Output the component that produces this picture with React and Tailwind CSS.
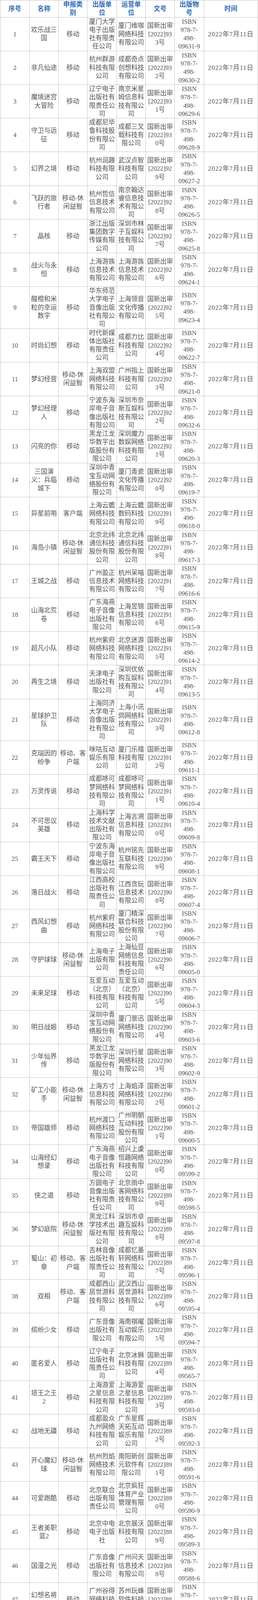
import React from "react";

// 序号 = index + 1, 文号 = 934 - 序号
const rows = [
    ["欢乐战三国", "移动", "厦门大学电子出版社有限责任公司", "厦门维咖网络科技有限公司", "09631-9"],
    ["非凡仙途", "移动", "杭州群游科技有限公司", "成都奇点创想科技有限公司", "09630-2"],
    ["魔境迷宫大冒险", "移动", "辽宁电子出版社有限责任公司", "南京米星姆信息科技有限公司", "09629-6"],
    ["守卫与远征", "移动", "成都尼毕鲁科技股份有限公司", "成都三叉戟科技有限公司", "09628-9"],
    ["幻界之境", "移动", "杭州润趣科技有限公司", "武汉点智科技有限公司", "09627-2"],
    ["飞跃的旅行者", "移动-休闲益智", "杭州哲信信息技术有限公司", "南京翰达睿信息技术有限公司", "09626-5"],
    ["晶核", "移动", "浙江出版集团数字传媒有限公司", "深圳市林子互娱科技有限公司", "09625-8"],
    ["战火与永恒", "移动", "上海游族信息技术有限公司", "上海游族信息技术有限公司", "09624-1"],
    ["酸橙和米粒的幸运数字", "移动", "华东师范大学电子音像出版社有限公司", "上海领音文化传播有限公司", "09623-4"],
    ["时尚幻想", "移动", "时代新媒体出版社有限责任公司", "成都力比科技有限公司", "09622-7"],
    ["梦幻经营", "移动-休闲益智", "上海双盟网络科技有限公司", "广州指上科技有限公司", "09621-0"],
    ["梦幻经理人", "移动", "宁波东海岸电子音像出版社有限公司", "深圳市奈斯互娱科技有限公司", "09632-6"],
    ["闪亮的你", "移动", "黑龙江龙华数字出版股份有限公司", "深圳魔力数娱网络科技有限公司", "09620-3"],
    ["三国演义：兵临城下", "移动", "深圳中青宝互动网络股份有限公司", "厦门青瓷文化传播有限公司", "09619-7"],
    ["异星前哨", "客户端", "上海云蟾网络科技有限公司", "上海云蟾数码科技有限公司", "09618-0"],
    ["海岛小镇", "移动-休闲益智", "北京北纬通信科技股份有限公司", "北京北纬通信科技股份有限公司", "09617-3"],
    ["王城之战", "移动", "广州盈正信息技术有限公司", "杭州呆喵网络科技有限公司", "09616-6"],
    ["山海北荒卷", "移动", "广东海燕电子音像出版社有限公司", "上海昱锦信息科技有限公司", "09615-9"],
    ["超凡小队", "移动", "杭州紫府网络科技有限公司", "北京迷游网络科技有限公司", "09614-2"],
    ["再生之境", "移动", "天津电子出版社有限公司", "深圳优依购互娱科技有限公司", "09613-5"],
    ["星球护卫队", "移动", "上海同济大学电子音像出版社有限公司", "上海小讯鸽网络科技有限公司", "09612-8"],
    ["克瑞因的纷争", "移动、客户端", "咪咕互动娱乐有限公司", "厦门乐禧科技有限公司", "09611-1"],
    ["万灵传说", "移动", "成都哆可梦网络科技有限公司", "成都哆可梦网络科技有限公司", "09610-4"],
    ["不可思议英雄", "移动", "上海科学技术文献出版社有限公司", "上海言溯信息科技有限公司", "09609-8"],
    ["霸王天下", "移动", "宁波东海岸电子音像出版社有限公司", "杭州铭先互联科技有限公司", "09608-1"],
    ["落日战火", "移动", "江西高校出版社有限责任公司", "江西贪玩信息技术有限公司", "09607-4"],
    ["西风幻想曲", "移动", "杭州紫府网络科技有限公司", "厦门精深联合科技股份有限公司", "09606-7"],
    ["守护球球", "移动-休闲益智", "上海电子出版有限公司", "上海仙豆网络信息科技有限责任公司", "09605-0"],
    ["未来足球", "移动", "互爱互动（北京）科技有限公司", "互爱互动（北京）科技有限公司", "09604-3"],
    ["明日战姬", "移动", "深圳中青宝互动网络股份有限公司", "厦门景迅网络科技有限公司", "09603-6"],
    ["少年仙界传", "移动", "黑龙江龙华数字出版股份有限公司", "深圳行星网络科技有限公司", "09602-9"],
    ["矿工小能手", "移动-休闲益智", "上海方寸信息科技有限公司", "上海焰泽网络科技有限公司", "09601-2"],
    ["帝国雄师", "移动", "杭州渡口网络科技有限公司", "广州明朝互动科技股份有限公司", "09600-5"],
    ["山海经幻想录", "移动", "广东海燕电子音像出版社有限公司", "绍兴上虞恒趣网络科技有限公司", "09599-2"],
    ["侠之道", "移动", "方圆电子音像出版社有限责任公司", "北京雨中客网络科技有限公司", "09598-5"],
    ["梦幻庭院", "移动-休闲益智", "黑龙江科学技术出版社有限公司", "深圳市卓趣互娱科技有限公司", "09597-8"],
    ["蜀山：初章", "移动、客户端", "吉林音像出版社有限责任公司", "成都忆墨轩网络科技有限公司", "09596-1"],
    ["双相", "移动、客户端", "成都西山居世游科技有限公司", "武汉西山居世游科技有限公司", "09595-4"],
    ["缤纷少女", "移动", "广东音像出版社有限公司", "海南祺曜互动娱乐有限公司", "09594-7"],
    ["匿名爱人", "移动", "辽宁电子出版社有限责任公司", "北京冰狮科技有限公司", "09565-7"],
    ["塔王之王2", "移动", "上海游爱之星信息科技有限公司", "上海游爱之星信息科技有限公司", "09593-0"],
    ["战地无疆", "移动", "成都盈众九州网络科技有限公司", "广东星辉天拓互动娱乐有限公司", "09592-3"],
    ["开心魔幻球", "移动-休闲益智", "杭州烈焰网络技术有限公司", "南阳新创元软件有限公司", "09591-6"],
    ["可爱跑酷", "移动", "北京联合出版有限责任公司", "北京疯狂体育产业管理有限公司", "09590-9"],
    ["王者美职篮2", "移动", "北京中电电子出版社", "北京展沃科技有限公司", "09589-3"],
    ["国漫之光", "移动", "广东音像出版社有限公司", "广州问天信息技术有限公司", "09588-6"],
    ["幻想名将录", "移动", "广州谷得网络科技有限公司", "苏州玩蜂软件科技有限公司", "09587-9"],
    ["怪兽球球", "移动", "重庆华龙网集团股份有限公司", "重庆星漫科技有限公司", "09586-2"],
    ["激战罗马", "移动", "广州盈正信息技术有限公司", "合肥火烈鸟科技有限公司", "09585-5"],
    ["枪法我最牛", "移动", "海南省电子音像出版社有限公司", "海南火舞新游信息技术有限公司", "09584-8"],
    ["百炼龙渊", "移动", "河南羲和网络科技股份有限公司", "深圳长华信息技术有限公司", "09583-1"],
    ["永恒轮回：无限", "移动", "深圳市创梦天地科技有限公司", "深圳市创梦天地科技有限公司", "09582-4"],
    ["序列回响", "移动", "河北冠林数字出版有限公司", "北京云路星途网络科技有限公司", "09581-7"],
    ["我的魔法英雄伙伴", "移动", "河北冠林数字出版有限公司", "海南妙趣神游网络科技有限公司", "09580-0"],
    ["大洋守护者", "移动", "华中科技大学电子音像出版社", "北京澄游网络科技有限公司", "09579-4"],
    ["守望之战", "移动", "北京漫游谷信息技术有限公司", "北京漫游谷信息技术有限公司", "09578-7"],
    ["大周列国志", "移动", "广东太平洋电子出版社", "厦门星岚造意网络技术有限公司", "09577-0"],
    ["梦回白玉京", "移动", "安徽新华电子音像出版社", "上海人人游戏科技发展股份有限公司", "09576-3"],
    ["艾恩洛亚炼金起源之章", "移动", "北京伯通电子出版社", "掌上彩讯（北京）无线传媒技术有限公司", "09575-6"],
    ["九合诸侯", "移动", "杭州润趣科技有限公司", "杭州火之网络科技有限公司", "09574-9"],
    ["勇敢的哈克", "移动", "厦门雷霆互动网络有限公司", "深圳市晓创生活科技有限公司", "09573-2"],
    ["迷你枪战精英", "移动", "湖北省扬子江影音有限责任公司", "深圳市迷你玩科技有限公司", "09572-5"],
    ["暗影火炬城", "客户端、游戏机-PS5", "上海蓝颖网络科技有限公司", "上海幻电信息科技有限公司", "09571-8"],
    ["非匿名指令", "移动", "海南动网先锋网络科技有限公司", "海南动网先锋网络科技有限公司", "09570-1"],
    ["荒岛狩猎", "移动", "海南省电子音像出版社有限公司", "海南自贸区椰云网络科技有限公司", "09569-5"],
    ["我叫MT:\n归来", "移动", "北京中清龙图网络技术有限公司", "北京中清龙图网络技术有限公司", "09568-8"],
    ["紫塞秋风", "客户端", "炫彩互动网络科技有限公司", "杭州风侠网络科技有限公司", "09567-1"],
];

const cell = "border border-[#c4c4c4] px-[3px] py-0 align-middle text-center";

const App = () => {
    return (
        <div className="w-[660px] overflow-hidden bg-white font-['Liberation_Serif','Noto_Sans_CJK_SC',serif] text-[16.5px] leading-[21.3px] text-[#555555]">
            <table className="w-[660px] table-fixed border-collapse">
                <colgroup>
                    <col className="w-[75px]" />
                    <col className="w-[74px]" />
                    <col className="w-[74px]" />
                    <col className="w-[75px]" />
                    <col className="w-[74px]" />
                    <col className="w-[74px]" />
                    <col className="w-[75px]" />
                    <col />
                </colgroup>
                <thead>
                    <tr className="font-bold text-[#2e6cb5]">
                        <th className={cell}>序号</th>
                        <th className={cell}>名称</th>
                        <th className={cell}>
                            申报类
                            <br />别
                        </th>
                        <th className={cell}>
                            出版单
                            <br />位
                        </th>
                        <th className={cell}>
                            运营单
                            <br />位
                        </th>
                        <th className={cell}>文号</th>
                        <th className={cell}>
                            出版物
                            <br />号
                        </th>
                        <th className={cell}>时间</th>
                    </tr>
                </thead>
                <tbody>
                    {rows.map((r, i) => {
                        const no = i + 1;
                        const wh = String(934 - no);
                        return (
                            <tr key={no}>
                                <td className={cell}>{no}</td>
                                <td className={`${cell} whitespace-pre-line`}>{r[0]}</td>
                                <td className={cell}>{r[1]}</td>
                                <td className={cell}>{r[2]}</td>
                                <td className={cell}>{r[3]}</td>
                                <td className={cell}>
                                    <div>国新出审</div>
                                    <div>[2022]{wh.slice(0, 2)}</div>
                                    <div>{wh.slice(2)}号</div>
                                </td>
                                <td className={cell}>
                                    <div>ISBN</div>
                                    <div>978-7-</div>
                                    <div>498-</div>
                                    <div>{r[4]}</div>
                                </td>
                                <td className={`${cell} tracking-[1px]`}>2022年7月11日</td>
                            </tr>
                        );
                    })}
                </tbody>
            </table>
        </div>
    );
};

export default App;
